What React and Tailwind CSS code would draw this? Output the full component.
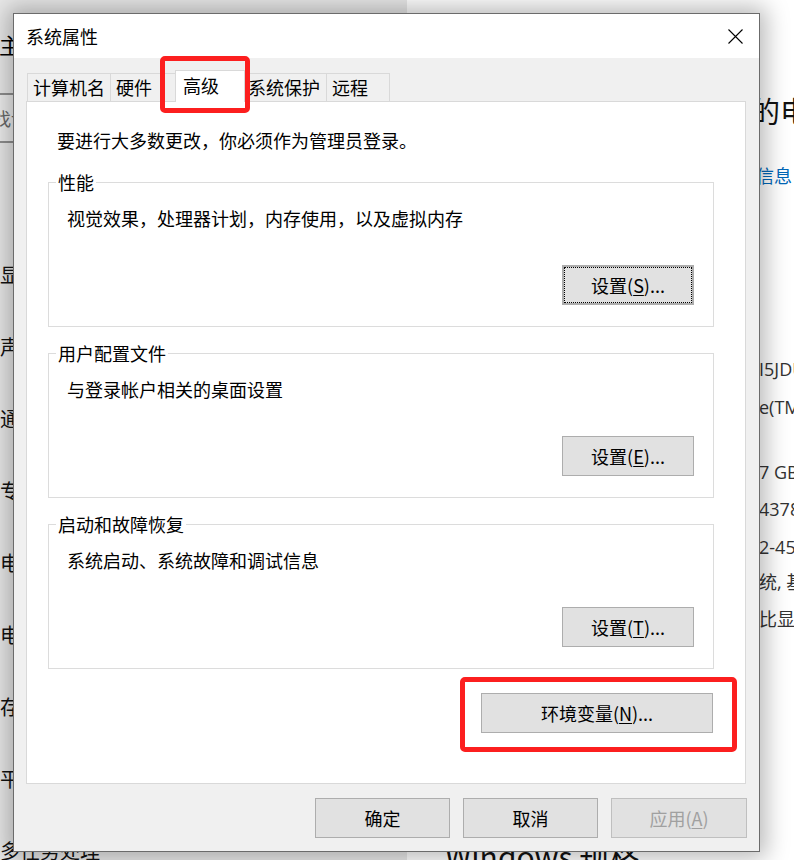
import React from "react";

const btn =
  "h-[40px] flex items-center justify-center bg-[#e1e1e1] border border-[#adadad] text-[18px] leading-[24px] whitespace-nowrap";

function GroupBox({ title, text, children }) {
  return (
    <div className="relative w-[666px] h-[145px] shrink-0 border border-[#dcdcdc] flex flex-col pt-[23px] pl-[18px] pr-[19px]">
      <div className="absolute left-[7px] top-[-13px] bg-white px-[2px] text-[18px] leading-[24px] whitespace-nowrap">
        {title}
      </div>
      <div className="text-[18px] leading-[24px] whitespace-nowrap">{text}</div>
      <div className="mt-[35px] flex justify-end">{children}</div>
    </div>
  );
}

function Tab({ label, w, cls = "" }) {
  return (
    <div
      className={`h-[28px] shrink-0 bg-[#f0f0f0] border-t border-l border-[#d9d9d9] pl-[5px] text-[18px] leading-[27px] whitespace-nowrap ${w} ${cls}`}
    >
      {label}
    </div>
  );
}

export default function App() {
  return (
    <div className="relative w-[794px] h-[860px] overflow-hidden bg-white text-black font-['Noto_Sans_CJK_SC','Noto_Sans',sans-serif]">
      {/* Background settings window */}
      <div className="absolute inset-0 flex">
        <div className="w-[407px] shrink-0 h-full bg-[#e9e9e9] flex flex-col">
          <div className="h-[88px] shrink-0 flex items-center text-[22px] leading-[28px] whitespace-nowrap -ml-[1px]">
            主页
          </div>
          <div className="mt-[5px] shrink-0 -ml-[40px] w-[330px] h-[50px] border-2 border-[#8f8f8f] bg-[#eeeeee] flex items-center pl-[13px] text-[18px] text-[#6a6a6a] whitespace-nowrap">
            查找设置
          </div>
          <div className="mt-[96px] shrink-0 flex flex-col text-[20px] text-[#111]">
            {["显示", "声音", "通知和操作", "专注助手", "电源和睡眠", "电池", "存储", "平板模式", "多任务处理"].map(
              (t, i) => (
                <div key={i} className="h-[72px] shrink-0 flex items-center whitespace-nowrap">
                  {t}
                </div>
              )
            )}
          </div>
        </div>
        <div className="flex-1 min-w-0 h-full bg-white flex flex-col whitespace-nowrap">
          <div className="mt-[90px] shrink-0 pl-[344px] text-[29px] leading-[40px] text-[#111]">的电脑</div>
          <div className="mt-[33px] shrink-0 pl-[349px] text-[18px] leading-[24px] text-[#0067b8]">信息</div>
          <div className="pl-[352px] shrink-0 flex flex-col text-[18px] leading-[24px] text-[#333] font-['Open_Sans','Noto_Sans_CJK_SC',sans-serif]">
            <div className="mt-[170px]">I5JDU</div>
            <div className="mt-[14px]">e(TM)</div>
            <div className="mt-[41px]">7 GB</div>
            <div className="mt-[13px]">4378</div>
            <div className="mt-[14px]">2-45F</div>
            <div className="mt-[11px]">统, 基于</div>
            <div className="mt-[13px]">比显示</div>
          </div>
          <div className="mt-[204px] shrink-0 pl-[38px] text-[30px] leading-[40px] text-[#111]">Windows 规格</div>
        </div>
      </div>

      {/* Dialog */}
      <div className="absolute left-[13px] top-[13px] z-10 w-[747px] h-[839px] border border-[#6b6b6b] bg-[#f0f0f0] flex flex-col shadow-[0_0_22px_6px_rgba(0,0,0,0.28)]">
        <div className="h-[44px] shrink-0 bg-white flex items-center justify-between pl-[12px] pr-[16px]">
          <span className="text-[18px] leading-[24px]">系统属性</span>
          <svg width="15" height="15" viewBox="0 0 15 15">
            <path d="M0.5 0.5L14.5 14.5M14.5 0.5L0.5 14.5" stroke="#000" strokeWidth="1.1" fill="none" />
          </svg>
        </div>
        <div className="flex-1 flex flex-col pt-[12px] pl-[12px] pr-[13px]">
          <div className="relative z-10 h-[31px] shrink-0 flex items-end pl-[1px]">
            <Tab label="计算机名" w="w-[83px]" />
            <Tab label="硬件" w="w-[67px]" />
            <div className="relative z-10 shrink-0 w-[70px] h-[32px] -mx-[2px] -mb-[1px] bg-white border-t border-l border-r border-[#d9d9d9] pl-[7px] pt-[2px] text-[18px] leading-[24px] whitespace-nowrap">
              高级
            </div>
            <Tab label="系统保护" w="w-[83px]" cls="border-l-0" />
            <Tab label="远程" w="w-[64px]" cls="border-r" />
          </div>
          <div className="h-[683px] shrink-0 bg-white border border-[#d9d9d9] flex flex-col pt-[26px]">
            <div className="pl-[30px] text-[18px] leading-[24px] whitespace-nowrap">
              要进行大多数更改，你必须作为管理员登录。
            </div>
            <div className="ml-[21px] mt-[30px] flex flex-col gap-[26px]">
              <GroupBox title="性能" text="视觉效果，处理器计划，内存使用，以及虚拟内存">
                <div className={`${btn} w-[132px] border-2 border-[#0078d7] outline-1 outline-dotted outline-black -outline-offset-3`}>
                  设置(<span className="underline underline-offset-2">S</span>)...
                </div>
              </GroupBox>
              <GroupBox title="用户配置文件" text="与登录帐户相关的桌面设置">
                <div className={`${btn} w-[132px]`}>
                  设置(<span className="underline underline-offset-2">E</span>)...
                </div>
              </GroupBox>
              <GroupBox title="启动和故障恢复" text="系统启动、系统故障和调试信息">
                <div className={`${btn} w-[132px]`}>
                  设置(<span className="underline underline-offset-2">T</span>)...
                </div>
              </GroupBox>
            </div>
            <div className="w-[666px] ml-[21px] mt-[24px] flex justify-end pr-[1px]">
              <div className={`${btn} w-[232px]`}>
                环境变量(<span className="underline underline-offset-2">N</span>)...
              </div>
            </div>
          </div>
          <div className="mt-[14px] shrink-0 flex justify-end gap-[13px] -mr-[1px]">
            <div className={`${btn} w-[135px]`}>确定</div>
            <div className={`${btn} w-[135px]`}>取消</div>
            <div className={`${btn} w-[136px] bg-[#cccccc] border-[#bfbfbf] text-[#a0a0a0]`}>
              应用(<span className="underline underline-offset-2">A</span>)
            </div>
          </div>
        </div>
      </div>

      {/* Red annotation boxes */}
      <div className="absolute left-[160px] top-[56px] z-20 w-[90px] h-[57px] border-[5px] border-[#fc1f1f] rounded-[5px]" />
      <div className="absolute left-[460px] top-[677px] z-20 w-[277px] h-[75px] border-[5px] border-[#fc1f1f] rounded-[5px]" />
    </div>
  );
}
